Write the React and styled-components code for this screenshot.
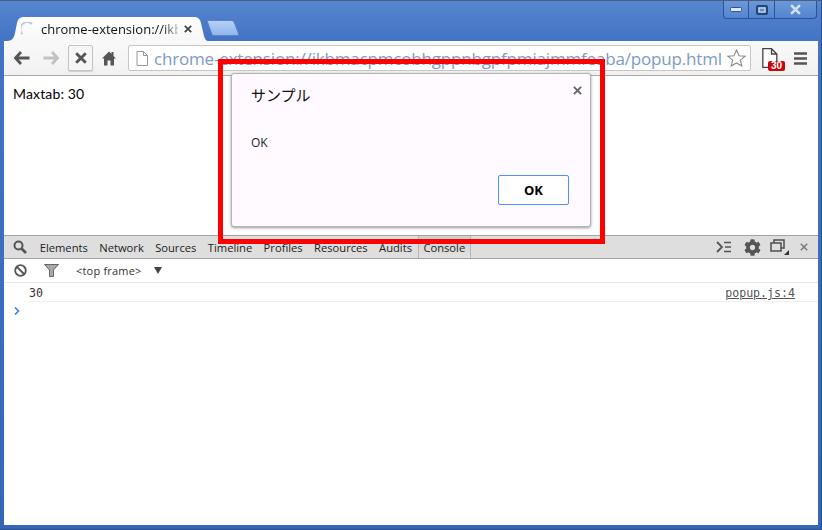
import React from 'react';
import styled, { createGlobalStyle } from 'styled-components';
import { FaCog } from 'react-icons/fa';

const GlobalStyle = createGlobalStyle`
  html, body {
    margin: 0;
    padding: 0;
    overflow: hidden;
    background: #fff;
  }
`;

const Window = styled.div`
  position: relative;
  box-sizing: border-box;
  width: 822px;
  height: 530px;
  display: flex;
  flex-direction: column;
  padding: 0 3px 4px 4px;
  background: linear-gradient(#5686cf 0, #4273c4 40px, #3566b8 100%);
  border: 1px solid #4a5f80;
  border-left-width: 0;
  border-right-color: #2c4f8c;
  border-bottom-color: #2c4f8c;
  font-family: "Open Sans", "Noto Sans", sans-serif;
`;

const Caption = styled.div`
  display: flex;
  justify-content: flex-end;
  height: 0;
  padding-right: 1px;
`;

const CaptionGroup = styled.div`
  display: flex;
  height: 17px;
  border: 1px solid #2d548f;
  border-top: 0;
  border-radius: 0 0 4px 4px;
  background: linear-gradient(#6c98d8, #5285cf);
`;

const CaptionButton = styled.div`
  width: ${p => p.$w}px;
  display: flex;
  align-items: center;
  justify-content: center;
  border-left: ${p => (p.$first ? '0' : '1px solid #2d548f')};
`;

const TabStrip = styled.div`
  display: flex;
  align-items: flex-end;
  height: 40px;
  flex-shrink: 0;
  padding-left: 3px;
`;

const Tab = styled.div`
  width: 201px;
  height: 24px;
  box-sizing: border-box;
  display: flex;
  align-items: center;
  padding: 0 12px 0 14px;
  gap: 6px;
  background: linear-gradient(#ffffff, #f7f7f7);
  clip-path: path('M0 24 C5 24 7 21 8 16 L10 6 C11 2 13 0 17 0 L187 0 C191 0 193 2 194 6 L197 19 C198 22 199 24 201 24 Z');
`;

const TabTitle = styled.div`
  width: 137px;
  font-size: 13px;
  color: #111;
  white-space: nowrap;
  mask-image: linear-gradient(to right, #000 88%, rgba(0, 0, 0, 0.25));
`;

const NewTab = styled.div`
  width: 26px;
  height: 14px;
  margin: 0 0 5px 1px;
  background: linear-gradient(#b4d0f7, #92b6ea);
  border: 1px solid #5a86c8;
  border-radius: 2px 3px 2px 2px;
  transform: skewX(20deg);
`;

const Toolbar = styled.div`
  display: flex;
  align-items: center;
  height: 35px;
  box-sizing: border-box;
  flex-shrink: 0;
  padding: 0 3px 0 3px;
  background: linear-gradient(#f9f9f9, #f1f1f1);
  border-bottom: 1px solid #a8a8a8;
`;

const ToolIcon = styled.div`
  width: ${p => p.$w || 29}px;
  height: 26px;
  flex-shrink: 0;
  display: flex;
  align-items: center;
  justify-content: center;
`;

const StopButton = styled(ToolIcon)`
  width: 25px;
  box-sizing: border-box;
  margin: 0 2px 0 3px;
  border: 1px solid #c4c4c4;
  border-radius: 2px;
  background: #f6f6f6;
  box-shadow: 0 1px 1px rgba(0, 0, 0, 0.15);
`;

const Omnibox = styled.div`
  flex: 1;
  height: 26px;
  min-width: 0;
  box-sizing: border-box;
  margin-left: 5px;
  display: flex;
  align-items: center;
  padding: 0 4px 0 7px;
  background: #fff;
  border: 1px solid #c6c6c6;
  border-radius: 2px;
`;

const Url = styled.div`
  flex: 1;
  margin-left: 6px;
  font-size: 17px;
  letter-spacing: -0.175px;
  color: #7d9ac2;
  white-space: nowrap;
`;

const Extension = styled.div`
  position: relative;
  width: 28px;
  height: 26px;
  margin-left: 7px;
  flex-shrink: 0;
`;

const Badge = styled.span`
  position: absolute;
  right: 1px;
  bottom: 0;
  width: 17px;
  height: 10px;
  background: #c8060c;
  border-radius: 2px;
  color: #fff;
  font: bold 10px/10px "Liberation Sans", sans-serif;
  text-align: center;
`;

const Page = styled.div`
  height: 159px;
  flex-shrink: 0;
  box-sizing: border-box;
  padding: 8px 9px;
  background: #fff;
  color: #000;
  font: 400 14px/20px "Lato", "Liberation Sans", sans-serif;
  letter-spacing: 0.15px;
`;

const DevTabs = styled.div`
  height: 24px;
  box-sizing: border-box;
  flex-shrink: 0;
  display: flex;
  align-items: center;
  padding: 0 4px 0 6px;
  background: #dedede;
  border-top: 1px solid #a3a3a3;
  border-bottom: 1px solid #a3a3a3;
`;

const DevTab = styled.div`
  height: 22px;
  display: flex;
  align-items: center;
  padding: 0 5.7px;
  font-size: 11.2px;
  color: #222;
  background: ${p => (p.$active ? 'linear-gradient(#cfcfcf, #e2e2e2)' : 'transparent')};
  box-shadow: ${p => (p.$active ? 'inset 1px 0 0 #b5b5b5, inset -1px 0 0 #b5b5b5' : 'none')};
`;

const DevSpacer = styled.div`
  flex: 1;
`;

const DevIcon = styled.div`
  width: ${p => p.$w}px;
  height: 22px;
  display: flex;
  align-items: center;
  justify-content: center;
  flex-shrink: 0;
  color: #555;
`;

const ConsoleBar = styled.div`
  height: 24px;
  box-sizing: border-box;
  flex-shrink: 0;
  display: flex;
  align-items: center;
  padding-left: 6px;
  background: #fff;
  border-bottom: 1px solid #e8e8e8;
`;

const FrameLabel = styled.div`
  margin-left: 4px;
  font-size: 11px;
  letter-spacing: 0.2px;
  color: #333;
`;

const Caret = styled.div`
  margin-left: 12px;
  width: 0;
  height: 0;
  border-left: 4px solid transparent;
  border-right: 4px solid transparent;
  border-top: 7px solid #444;
`;

const ConsoleBody = styled.div`
  flex: 1;
  background: #fff;
  font: 11.6px/20px "DejaVu Sans Mono", monospace;
`;

const LogRow = styled.div`
  display: flex;
  justify-content: space-between;
  height: 19px;
  box-sizing: border-box;
  margin-left: 25px;
  padding-right: 23px;
  border-bottom: 1px solid #efefef;
  color: #333;
`;

const SourceLink = styled.span`
  color: #555;
  text-decoration: underline;
`;

const Prompt = styled.div`
  padding: 2px 0 0 10px;
  height: 14px;
  display: flex;
  align-items: center;
`;

const Highlight = styled.div`
  position: absolute;
  left: 218px;
  top: 58px;
  width: 387px;
  height: 185px;
  box-sizing: border-box;
  border: 5px solid #fe0000;
  padding: 9px 9px 12px 8px;
  display: flex;
`;

const Dialog = styled.div`
  position: relative;
  flex: 1;
  box-sizing: border-box;
  display: flex;
  flex-direction: column;
  padding: 9px 21px 21px 19px;
  background: #fefaff;
  border: 1px solid #b4b4b4;
  border-radius: 3px;
  box-shadow: 0 1px 3px rgba(0, 0, 0, 0.4);
`;

const DialogTitle = styled.div`
  font: 400 15px/24px "Noto Sans CJK JP", sans-serif;
  color: #111;
`;

const DialogClose = styled.div`
  position: absolute;
  right: 8px;
  top: 12px;
  line-height: 0;
`;

const DialogMessage = styled.div`
  margin-top: 28px;
  font-size: 12px;
  line-height: 16px;
  color: #222;
`;

const DialogFooter = styled.div`
  margin-top: auto;
  display: flex;
  justify-content: flex-end;
`;

const OkButton = styled.button`
  width: 71px;
  height: 30px;
  padding: 0;
  background: #fff;
  border: 1px solid #4d90fe;
  border-radius: 2px;
  color: #000;
  font: 700 13px "Open Sans", sans-serif;
`;

const CloseGlyph = ({ size = 9, color = '#555', width = 2.2 }) => (
  <svg width={size} height={size} viewBox="0 0 10 10">
    <path d="M1 1 L9 9 M9 1 L1 9" stroke={color} strokeWidth={width} fill="none" />
  </svg>
);

const Arrow = ({ color, flip }) => (
  <svg width="16" height="14" viewBox="0 0 16 14" style={flip ? { transform: 'scaleX(-1)' } : undefined}>
    <path d="M7 1 L1.5 7 L7 13 M2 7 H15.5" stroke={color} strokeWidth="2.8" fill="none" />
  </svg>
);

const HomeIcon = () => (
  <svg width="14" height="15" viewBox="0 0 14 15">
    <path d="M7 0.5 L0 7.5 H2 V14.5 H5.5 V9.5 H8.5 V14.5 H12 V7.5 H14 L11.5 5 V1 H9.5 V3 Z" fill="#555" />
  </svg>
);

const PageIcon = ({ w = 12, h = 15, stroke = '#999' }) => (
  <svg width={w} height={h} viewBox="0 0 12 15">
    <path d="M1 0.5 H7.5 L11.5 4.5 V14.5 H1 Z M7.5 0.5 V4.5 H11.5" stroke={stroke} fill="#fff" />
  </svg>
);

const Star = () => (
  <svg width="19" height="18" viewBox="0 0 19 18">
    <path d="M9.5 1 L12 6.8 L18 7.3 L13.4 11.2 L14.8 17 L9.5 14 L4.2 17 L5.6 11.2 L1 7.3 L7 6.8 Z" fill="#fff" stroke="#8a8a8a" strokeWidth="1.1" />
  </svg>
);

const Menu = () => (
  <svg width="13" height="13" viewBox="0 0 13 13">
    <path d="M0 1.5 H13 M0 6.5 H13 M0 11.5 H13" stroke="#555" strokeWidth="2.4" />
  </svg>
);

const Spinner = () => (
  <svg width="14" height="14" viewBox="0 0 14 14">
    <path d="M1.5 12 A6 6 0 0 1 11 2" stroke="#b9c8dc" strokeWidth="1.8" fill="none" />
  </svg>
);

const SearchIcon = () => (
  <svg width="14" height="14" viewBox="0 0 14 14">
    <circle cx="5.5" cy="5.5" r="4" stroke="#555" strokeWidth="2" fill="none" />
    <path d="M8.5 8.5 L13 13" stroke="#555" strokeWidth="2.6" />
  </svg>
);

const DrawerIcon = () => (
  <svg width="16" height="12" viewBox="0 0 16 12">
    <path d="M1 1 L6 6 L1 11" stroke="#555" strokeWidth="1.8" fill="none" />
    <path d="M8 1.5 H15 M9 6 H15 M8 10.5 H15" stroke="#555" strokeWidth="1.6" />
  </svg>
);

const DockIcon = () => (
  <svg width="20" height="16" viewBox="0 0 20 16">
    <rect x="4" y="1" width="10" height="8" fill="none" stroke="#555" strokeWidth="1.6" />
    <rect x="1" y="4" width="10" height="8" fill="#dedede" stroke="#555" strokeWidth="1.6" />
    <path d="M19 11 V16 H14 Z" fill="#333" />
  </svg>
);

const BlockIcon = () => (
  <svg width="13" height="13" viewBox="0 0 13 13">
    <circle cx="6.5" cy="6.5" r="5.3" stroke="#555" strokeWidth="1.8" fill="none" />
    <path d="M3 3 L10 10" stroke="#555" strokeWidth="1.8" />
  </svg>
);

const FilterIcon = () => (
  <svg width="15" height="13" viewBox="0 0 15 13">
    <path d="M0.5 0.5 H14.5 L9.5 6 V12.5 H5.5 V6 Z" fill="#a8a8a8" stroke="#666" strokeWidth="1" />
  </svg>
);

const devTabs = ['Elements', 'Network', 'Sources', 'Timeline', 'Profiles', 'Resources', 'Audits', 'Console'];

const App = () => {
  return (
    <>
      <GlobalStyle />
      <Window>
        <Caption>
          <CaptionGroup>
            <CaptionButton $w={24} $first>
              <svg width="12" height="5" viewBox="0 0 12 5"><rect x="0.5" y="0.5" width="11" height="4" rx="1" fill="#dfe8f5" stroke="#31558e" /></svg>
            </CaptionButton>
            <CaptionButton $w={25}>
              <svg width="12" height="10" viewBox="0 0 12 10"><rect x="1" y="1" width="10" height="8" rx="1" fill="none" stroke="#26456f" strokeWidth="2" /><rect x="3" y="3" width="6" height="4" fill="none" stroke="#dfe8f5" /></svg>
            </CaptionButton>
            <CaptionButton $w={41}>
              <CloseGlyph size={11} color="#d5e0f0" width={2.4} />
            </CaptionButton>
          </CaptionGroup>
        </Caption>

        <TabStrip>
          <Tab>
            <Spinner />
            <TabTitle>chrome-extension://ikb</TabTitle>
            <CloseGlyph size={8} color="#444" width={2.2} />
          </Tab>
          <NewTab />
        </TabStrip>

        <Toolbar>
          <ToolIcon><Arrow color="#555" /></ToolIcon>
          <ToolIcon><Arrow color="#c2c2c2" flip /></ToolIcon>
          <StopButton><CloseGlyph size={12} color="#555" width={2.4} /></StopButton>
          <ToolIcon $w={28}><HomeIcon /></ToolIcon>
          <Omnibox>
            <PageIcon />
            <Url>chrome-extension://ikbmacpmcobhgppnbgpfpmiajmmfeaba/popup.html</Url>
            <Star />
          </Omnibox>
          <Extension>
            <ToolIcon $w={22}><PageIcon w={17} h={20} stroke="#444" /></ToolIcon>
            <Badge>30</Badge>
          </Extension>
          <ToolIcon $w={29}><Menu /></ToolIcon>
        </Toolbar>

        <Page>Maxtab: 30</Page>

        <DevTabs>
          <DevIcon $w={19}><SearchIcon /></DevIcon>
          <DevIcon $w={5} />
          {devTabs.map(name => (
            <DevTab key={name} $active={name === 'Console'}>{name}</DevTab>
          ))}
          <DevSpacer />
          <DevIcon $w={31}><DrawerIcon /></DevIcon>
          <DevIcon $w={27}><FaCog size={17} /></DevIcon>
          <DevIcon $w={28}><DockIcon /></DevIcon>
          <DevIcon $w={20}><CloseGlyph size={8} color="#777" width={1.8} /></DevIcon>
        </DevTabs>

        <ConsoleBar>
          <DevIcon $w={20}><BlockIcon /></DevIcon>
          <DevIcon $w={42}><FilterIcon /></DevIcon>
          <FrameLabel>&lt;top frame&gt;</FrameLabel>
          <Caret />
        </ConsoleBar>

        <ConsoleBody>
          <LogRow>
            <span>30</span>
            <SourceLink>popup.js:4</SourceLink>
          </LogRow>
          <Prompt>
            <svg width="6" height="8" viewBox="0 0 6 8"><path d="M1 0.5 L4.5 4 L1 7.5" stroke="#3b82ee" strokeWidth="1.6" fill="none" /></svg>
          </Prompt>
        </ConsoleBody>

        <Highlight>
          <Dialog>
            <DialogTitle>サンプル</DialogTitle>
            <DialogClose><CloseGlyph size={9} color="#666" width={2.2} /></DialogClose>
            <DialogMessage>OK</DialogMessage>
            <DialogFooter><OkButton>OK</OkButton></DialogFooter>
          </Dialog>
        </Highlight>
      </Window>
    </>
  );
};

export default App;
